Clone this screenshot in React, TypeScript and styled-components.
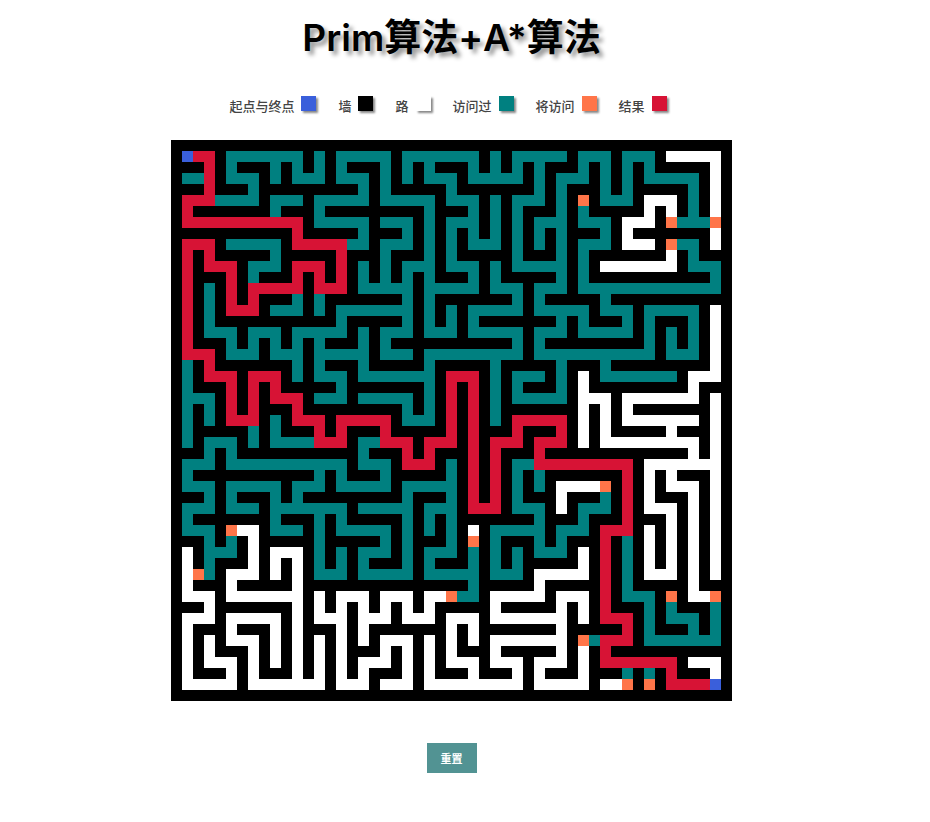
import React, { useState } from "react";
import styled, { createGlobalStyle } from "styled-components";

const GlobalStyle = createGlobalStyle`
  body {
    margin: 0;
    background: #fff;
    font-family: "Noto Sans CJK SC", "Noto Sans", sans-serif;
  }
`;

const colors = {
  endpoint: "#3a5fdb",
  wall: "#000000",
  road: "#ffffff",
  visited: "#008080",
  frontier: "#ff7549",
  result: "#d71335",
};

type CellKind = keyof typeof colors;

const kinds: Record<string, CellKind> = {
  b: "endpoint",
  "#": "wall",
  ".": "road",
  t: "visited",
  o: "frontier",
  r: "result",
};

const maze = [
  "###################################################",
  "#brr#ttttttt#t#ttttt#ttttttt#t#ttttt#ttt#ttt#.....#",
  "###r#t###t#t#t#t###t#t#t###t#t#t#t###t#t#t#t#####.#",
  "#ttr#ttt#t#ttt#ttt#t#t#ttt#ttttt#t#ttt#t#t#ttttt#.#",
  "###r###t#########t#t#####t#######t#t###t#t#####t#.#",
  "#rrrtttt#ttt#ttttt#ttttt#ttt#t#ttt#t#o#ttt#...#t#.#",
  "#r#######t###t#########t###t#t#t###t#t#####.#.#t#.#",
  "#rrrrrrrrrrr#ttttt#ttt#t#ttt#t#t#ttt#ttt#...#ottto#",
  "###########r#####t###t#t#t#t#t#t#t#t###t#.#######.#",
  "#rrr#ttttt#rrrrrtt#ttt#t#t#ttt#t#t#t#ttt#...#ott#.#",
  "#r#r#####t#####r###t###t#t#####t###t#t#######.#t###",
  "#r#rrr#ttt#rrr#r#t#t#ttt#ttt#t#ttttt#t#.......#ttt#",
  "#r###r#t###r#r#r#t#t#t#t###t#t#####t#t###########t#",
  "#r#t#r#rrrrr#rrr#ttttt#ttttt#ttt#ttt#ttttttttttttt#",
  "#r#t#r#r###t#t#######t#t#######t#t#####t###########",
  "#r#t#rrr#ttt#t#ttttttt#t#t#ttttt#ttttt#ttt#ttttt#.#",
  "#r#t###########t#####t#t#t#t#######t#t###t#t###t#.#",
  "#r#ttt#ttt#ttttt#t#ttt#ttt#ttttt#ttt#ttttt#t#t#t#.#",
  "#r###t#t#t#t#t###t#t###########t#t#########t#t#t#.#",
  "#rrr#ttt#ttt#ttttt#ttt#ttttttttt#ttttttttttt#ttt#.#",
  "#t#r#######t#t###t#####t#####t#####t###t#########.#",
  "#t#rrr#rrr#t#ttt#ttttttt#rrr#t#ttt#t#.#ttttttt#...#",
  "#t###r#r#r#####t#######t#r#r#t#t###t#.#########.###",
  "#ttt#r#r#rrr#ttt#ttttt#t#r#r#t#ttttt#...#.......#.#",
  "#t#t#r#r###r#########t#t#r#r#t#######.#.#.#######.#",
  "#t#t#rrr#t#rrr#rrrrr#ttt#r#r#t#rrrrr#.#.#.......#.#",
  "#t#####t#t###r#r###r#####r#r###r###r#.#.#####.###.#",
  "#t#ttt#t#ttttrrr#ttrrr#rrr#r#rrr#rrr#.#.........#.#",
  "###t#t###########t###r#r###r#r###r#############.#.#",
  "#ttt#ttttttttttt#ttt#rrr#t#r#r#ttrrrrrrrrr#.......#",
  "#t###########t#t###t#####t#r#r#t#t#######r#.#.###.#",
  "#ttt#ttttt#ttt#ttttt#ttttt#r#r#t#t#....o#r#.#...#.#",
  "###t#t###t#t#########t###t#r#r#t###.###t#r#.###.#.#",
  "#ttt#ttt#ttttttt#ttttt#ttt#rrr#ttt#.#ttt#r#...#.#.#",
  "#t#######t###t#t#####t#t#t#######t###t###r###.#.#.#",
  "#ttt#o..#ttt#t#ttttt#t#t#t#.#ttttt#ttt#rrr#.#.#.#.#",
  "###t#t#.#####t#####t#t###t#o#t###t#t###r#t#.#.#.#.#",
  "#.#ttt#.#...#t#t#ttt#t#ttt#t#t#t#ttt#.#r#t#.#.#.#.#",
  "#.#t###.#.#.#t#t#t###t#t###t#t#t#####.#r#t#.#.#.#.#",
  "#.ot#...#.#.#ttt#ttttt#ttttt#ttt#.....#r#t#...#.#.#",
  "#.###.#####.###############t#####.#####r#t#####.###",
  "#...#.......#.#...#...#..ott#.....#...#r#ttt#o#..o#",
  "###.#######.#.#.#.#.#.#.#####.#####.#.#r###t#t###t#",
  "#...#.....#.#...#...#...#...#.......#.#rrr#t#ttt#t#",
  "#.###.###.#.###.#.#######.#.#######.#####r#t###t#t#",
  "#.#.#...#.#.#.#.#.#...#.#.#.#.......#otrrr#ttttttt#",
  "#.#.###.#.#.#.#.###.#.#.#.###.#####.#.#r###########",
  "#.#...#.#.#.#.#.#...#.#.#...#...#...#.#rrrrrrr#...#",
  "#.###.#.###.#.#.#.###.#.###.###.#.###.###t#t#r###.#",
  "#.....#.......#...#...#.........#.....#..o#o#rrrrb#",
  "###################################################",
];

const legend: { label: string; kind: CellKind }[] = [
  { label: "起点与终点", kind: "endpoint" },
  { label: "墙", kind: "wall" },
  { label: "路", kind: "road" },
  { label: "访问过", kind: "visited" },
  { label: "将访问", kind: "frontier" },
  { label: "结果", kind: "result" },
];

const Page = styled.main`
  display: flex;
  flex-direction: column;
  align-items: center;
  padding: 11px 27px 40px 0;
`;

const Title = styled.h1`
  margin: 0;
  font-family: Inter, "Noto Sans CJK SC", sans-serif;
  font-size: 37px;
  line-height: 54px;
  font-weight: 600;
  color: #000;
  text-shadow: 4px 4px 4px #999;
`;

const Legend = styled.ul`
  display: flex;
  flex-wrap: wrap;
  gap: 22px;
  margin: 31px 0 0;
  padding: 0 7px 0 0;
  list-style: none;
`;

const LegendItem = styled.li`
  display: flex;
  align-items: flex-start;
  gap: 7px;
  font-size: 13px;
  line-height: 20px;
  font-weight: 500;
  color: #444;
`;

const Swatch = styled.span<{ $kind: CellKind }>`
  width: 15px;
  height: 15px;
  background: ${(p) => colors[p.$kind]};
  box-shadow: 2px 2px 2px #888;
`;

const Board = styled.svg`
  display: block;
  width: 561px;
  max-width: 100%;
  margin-top: 24px;
  background: ${colors.wall};
`;

const ResetButton = styled.button`
  margin-top: 42px;
  padding: 0 14px;
  border: 0;
  background: #529393;
  color: #fff;
  font-family: inherit;
  font-size: 11px;
  font-weight: 700;
  line-height: 30px;
  cursor: pointer;
`;

function MazeRow({ row, y }: { row: string; y: number }) {
  const runs = Array.from(row.matchAll(/(.)\1*/g)).filter((m) => m[1] !== "#");
  return (
    <>
      {runs.map((m) => (
        <rect key={m.index} x={m.index} y={y} width={m[0].length} height={1} fill={colors[kinds[m[1]]]} />
      ))}
    </>
  );
}

export default function App() {
  const [run, setRun] = useState(0);
  return (
    <Page>
      <GlobalStyle />
      <Title>Prim算法+A*算法</Title>
      <Legend>
        {legend.map(({ label, kind }) => (
          <LegendItem key={kind}>
            {label}
            <Swatch $kind={kind} />
          </LegendItem>
        ))}
      </Legend>
      <Board key={run} viewBox={`0 0 ${maze[0].length} ${maze.length}`} shapeRendering="crispEdges" role="img" aria-label="迷宫">
        {maze.map((row, y) => (
          <MazeRow key={y} row={row} y={y} />
        ))}
      </Board>
      <ResetButton type="button" onClick={() => setRun(run + 1)}>
        重置
      </ResetButton>
    </Page>
  );
}
